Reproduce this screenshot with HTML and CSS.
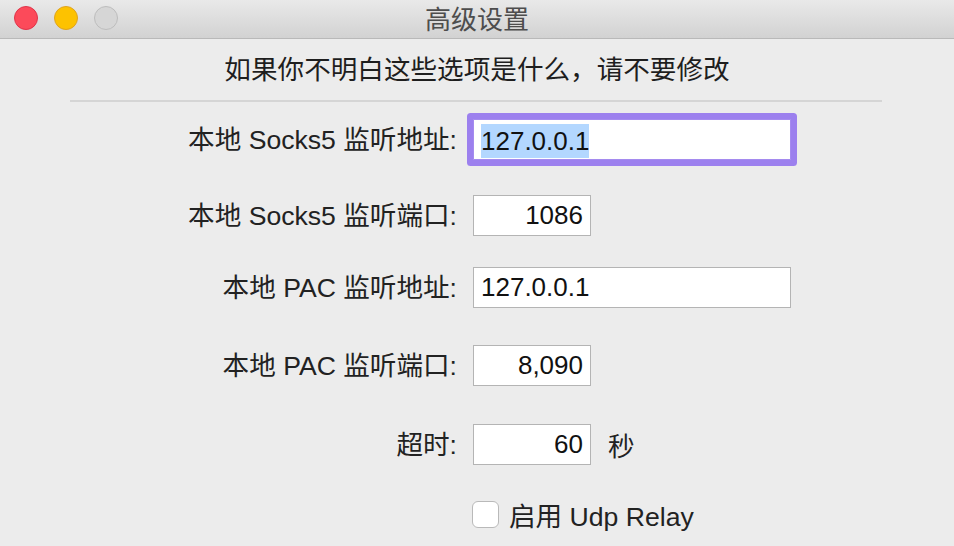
FILE: index.html
```html
<!DOCTYPE html>
<html lang="zh-CN">
<head>
<meta charset="utf-8">
<title>高级设置</title>
<link rel="stylesheet" href="styles.css">
</head>
<body>
<div class="window">
  <div class="titlebar">
    <div class="lights">
      <span class="light red"></span>
      <span class="light yellow"></span>
      <span class="light gray"></span>
    </div>
    <div class="title">高级设置</div>
  </div>
  <div class="content">
    <p class="notice">如果你不明白这些选项是什么，请不要修改</p>
    <div class="sep"></div>
    <div class="form">
      <div class="row r1">
        <label class="lbl">本地 Socks5 监听地址:</label>
        <div class="field wide focused"><span class="sel">127.0.0.1</span></div>
      </div>
      <div class="row r2">
        <label class="lbl">本地 Socks5 监听端口:</label>
        <div class="field narrow num">1086</div>
      </div>
      <div class="row r3">
        <label class="lbl">本地 PAC 监听地址:</label>
        <div class="field wide">127.0.0.1</div>
      </div>
      <div class="row r4">
        <label class="lbl">本地 PAC 监听端口:</label>
        <div class="field narrow num">8,090</div>
      </div>
      <div class="row r5">
        <label class="lbl">超时:</label>
        <div class="field narrow num">60</div>
        <span class="unit">秒</span>
      </div>
      <div class="row r6">
        <span class="lbl"></span>
        <span class="check"></span>
        <span class="checklbl">启用 Udp Relay</span>
      </div>
    </div>
  </div>
</div>
</body>
</html>
```
FILE: styles.css
```css
* { box-sizing: border-box; }
html, body { margin: 0; padding: 0; }
body {
  width: 954px;
  height: 546px;
  overflow: hidden;
  background: #ececec;
  font-family: "Liberation Sans", "Noto Sans CJK SC", sans-serif;
  font-size: 26px;
  color: #262626;
}
.window { width: 954px; height: 546px; background: #ececec; }
.titlebar {
  height: 39px;
  background: linear-gradient(#e9e9e9, #d2d2d2);
  border-bottom: 1px solid #b9b9b9;
  display: flex;
  align-items: center;
  justify-content: center;
  position: relative;
}
.lights {
  position: absolute;
  left: 14px;
  top: 6px;
  display: flex;
  gap: 16px;
}
.light {
  width: 24px;
  height: 24px;
  border-radius: 50%;
  display: block;
}
.red { background: #fc4a5a; border: 1px solid #e0344a; }
.yellow { background: #fdc200; border: 1px solid #dfa320; }
.gray { background: #d6d6d6; border: 1px solid #bdbdbd; }
.title {
  font-family: "Noto Sans CJK SC", sans-serif;
  font-size: 26px;
  line-height: 30px;
  color: #4d4d4d;
  margin-top: -2px;
}
.notice {
  margin: 13px 0 0;
  text-align: center;
  font-family: "Noto Sans CJK SC", sans-serif;
  font-size: 26.6px;
  line-height: 32px;
  color: #1e1e1e;
}
.sep {
  margin: 16px 72px 0 70px;
  height: 2px;
  background: #d5d5d5;
}
.form { display: flex; flex-direction: column; }
.row { display: flex; align-items: center; }
.lbl {
  width: 457px;
  flex: none;
  text-align: right;
  margin-right: 16px;
  line-height: 32px;
  font-size: 26.6px;
  color: #222;
}
.field {
  height: 41px;
  background: #fff;
  border: 1px solid #b4b4b4;
  font-size: 26px;
  line-height: 39px;
  color: #111;
  padding: 0 7px;
  white-space: nowrap;
}
.wide { width: 318px; }
.narrow { width: 118px; }
.num { text-align: right; }
.focused {
  border-color: #a58bef;
  box-shadow: 0 0 0 6px #9c80ee;
  border-radius: 1px;
  padding-top: 2px;
}
.sel { background: #b3d7ff; display: inline-block; line-height: 34px; }
.r1 { margin-top: 17px; }
.r2 { margin-top: 35px; }
.r3 { margin-top: 31px; }
.r4 { margin-top: 37px; }
.r5 { margin-top: 38px; }
.r6 { margin-top: 30px; }
.unit { margin-left: 17px; color: #222; font-size: 26.6px; }
.check {
  width: 27px;
  height: 27px;
  background: #fff;
  border: 1px solid #b9b9b9;
  border-radius: 6px;
  margin-left: -1px;
  flex: none;
}
.checklbl { margin-left: 10px; color: #222; font-size: 26.6px; }
```
